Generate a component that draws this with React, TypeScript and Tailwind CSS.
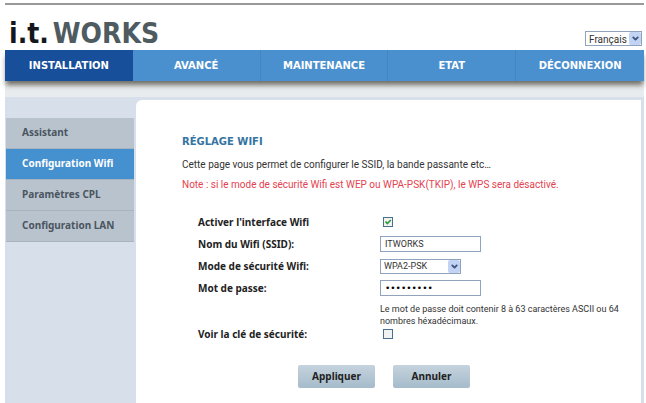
import type { ReactNode } from 'react';
import { ChevronDown } from 'lucide-react';

const tabs = ['INSTALLATION', 'AVANCÉ', 'MAINTENANCE', 'ETAT', 'DÉCONNEXION'];
const sections = ['Assistant', 'Configuration Wifi', 'Paramètres CPL', 'Configuration LAN'];

function Select({ id, label, options, className }: { id: string; label?: string; options: string[]; className: string }) {
  return (
    <div className={`relative border border-[#8fa3bd] bg-white ${className}`}>
      <select id={id} aria-label={label} className="block h-full w-full appearance-none bg-transparent pl-[3px] text-inherit outline-none">
        {options.map((o) => (
          <option key={o}>{o}</option>
        ))}
      </select>
      <span className="pointer-events-none absolute inset-y-0 right-0 flex w-3 items-center justify-center rounded-xs bg-[#c3d3f3] text-[#3d5580]">
        <ChevronDown size={9} strokeWidth={5} />
      </span>
    </div>
  );
}

function Checkbox({ id, checked }: { id: string; checked?: boolean }) {
  return (
    <span className="relative ml-[3px] block size-[10px]">
      <input id={id} type="checkbox" defaultChecked={checked} className="peer block size-[10px] appearance-none border border-[#49708f] bg-[#f1f3f1]" />
      <svg viewBox="0 0 10 10" className="pointer-events-none absolute inset-0 hidden size-[10px] peer-checked:block" aria-hidden="true">
        <path d="M2.5 4.5 4.3 6.5 7.8 3" fill="none" stroke="#2c9a3c" strokeWidth="1.7" />
      </svg>
    </span>
  );
}

function Row({ id, label, children }: { id: string; label: string; children: ReactNode }) {
  return (
    <div className="flex h-[22px] items-center">
      <label htmlFor={id} className="w-[182px] shrink-0 font-['Noto_Sans',sans-serif] text-[10px] font-bold text-[#222]">
        {label}
      </label>
      {children}
    </div>
  );
}

export default function App() {
  return (
    <div className="min-h-screen bg-white pt-[3px] pr-0.5 pl-[5px] font-['Roboto','Liberation_Sans',sans-serif] text-[10px] text-[#333]">
      <header className="flex h-[47px] items-end justify-between border-t-2 border-[#999] pr-0.5 pl-1">
        <div className="flex h-full items-center gap-1 pt-3 font-['DejaVu_Sans_Condensed','DejaVu_Sans',sans-serif] text-[28px] leading-none font-bold text-[#4e5b60]">
          <span className="text-[#14171c]">i.t.</span>
          <span>WORKS</span>
        </div>
        <Select id="lang" label="Langue" options={['Français', 'English']} className="mb-1 h-[15px] w-[57px] text-[10px]" />
      </header>

      <nav className="relative z-10 grid h-[31px] grid-cols-5 bg-[#4a90ce] font-['DejaVu_Sans',sans-serif] text-[10px] font-bold text-white shadow-[0_5px_5px_-1px_rgba(60,55,45,0.7)]">
        {tabs.map((t, i) => (
          <a
            key={t}
            href="#"
            aria-current={i === 0 ? 'page' : undefined}
            className={`flex items-center justify-center ${i === 0 ? 'bg-[#174f9b]' : 'border-r border-[#4585bf] last:border-r-0'}`}
          >
            {t}
          </a>
        ))}
      </nav>
      <div className="h-4 bg-[#e9ecee]" />

      <div className="flex min-h-[306px] bg-[#d7dfea] pt-[3px] pr-[3px]">
        <aside className="w-[131px] shrink-0 pt-[18px] pr-0.5 pl-px">
          {sections.map((s, i) => (
            <a
              key={s}
              href="#"
              className={`flex h-[31px] items-center border-b border-[#a7b3bf] pb-0.5 pl-4 font-['Noto_Sans',sans-serif] text-[10px] font-bold ${i === 1 ? 'bg-[#4590cf] text-white' : 'bg-[#b8c3ce] text-[#4b555f]'}`}
            >
              {s}
            </a>
          ))}
        </aside>

        <main className="min-w-0 flex-1 rounded-tl-md bg-white pt-[33px] pl-[46px]">
          <h1 className="font-['DejaVu_Sans',sans-serif] text-[10px] leading-[18px] font-bold text-[#34749f]">RÉGLAGE WIFI</h1>
          <p className="mt-1 leading-5">Cette page vous permet de configurer le SSID, la bande passante etc…</p>
          <p className="leading-5 text-[#e5424f]">Note : si le mode de sécurité Wifi est WEP ou WPA-PSK(TKIP), le WPS sera désactivé.</p>

          <form className="mt-4 pl-4" onSubmit={(e) => e.preventDefault()}>
            <Row id="wifi" label="Activer l'interface Wifi">
              <Checkbox id="wifi" checked />
            </Row>
            <Row id="ssid" label="Nom du Wifi (SSID):">
              <input id="ssid" defaultValue="ITWORKS" className="h-4 w-[101px] border border-[#8fa3bd] px-1 text-[9px]" />
            </Row>
            <Row id="mode" label="Mode de sécurité Wifi:">
              <Select id="mode" options={['WPA2-PSK', 'WPA-PSK', 'WEP']} className="h-[15px] w-[81px] text-[9px]" />
            </Row>
            <Row id="pass" label="Mot de passe:">
              <input id="pass" type="password" defaultValue="motdepass" className="h-4 w-[101px] border border-[#8fa3bd] px-1 font-['DejaVu_Sans',sans-serif] text-[9px] text-black" />
            </Row>
            <p className="ml-[182px] w-[240px] pt-1 text-[9px] leading-3">Le mot de passe doit contenir 8 à 63 caractères ASCII ou 64 nombres héxadécimaux.</p>
            <div className="-mt-1">
              <Row id="show" label="Voir la clé de sécurité:">
                <Checkbox id="show" />
              </Row>
            </div>
            <div className="mt-5 ml-[100px] flex gap-[18px] font-['Noto_Sans',sans-serif] text-[10px] font-bold text-[#222]">
              <button type="submit" className="h-[23px] w-[77px] rounded-xs bg-linear-to-b from-[#c5d3dd] to-[#a5bbcb]">
                Appliquer
              </button>
              <button type="reset" className="h-[23px] w-[77px] rounded-xs bg-linear-to-b from-[#c5d3dd] to-[#a5bbcb]">
                Annuler
              </button>
            </div>
          </form>
        </main>
      </div>
    </div>
  );
}
